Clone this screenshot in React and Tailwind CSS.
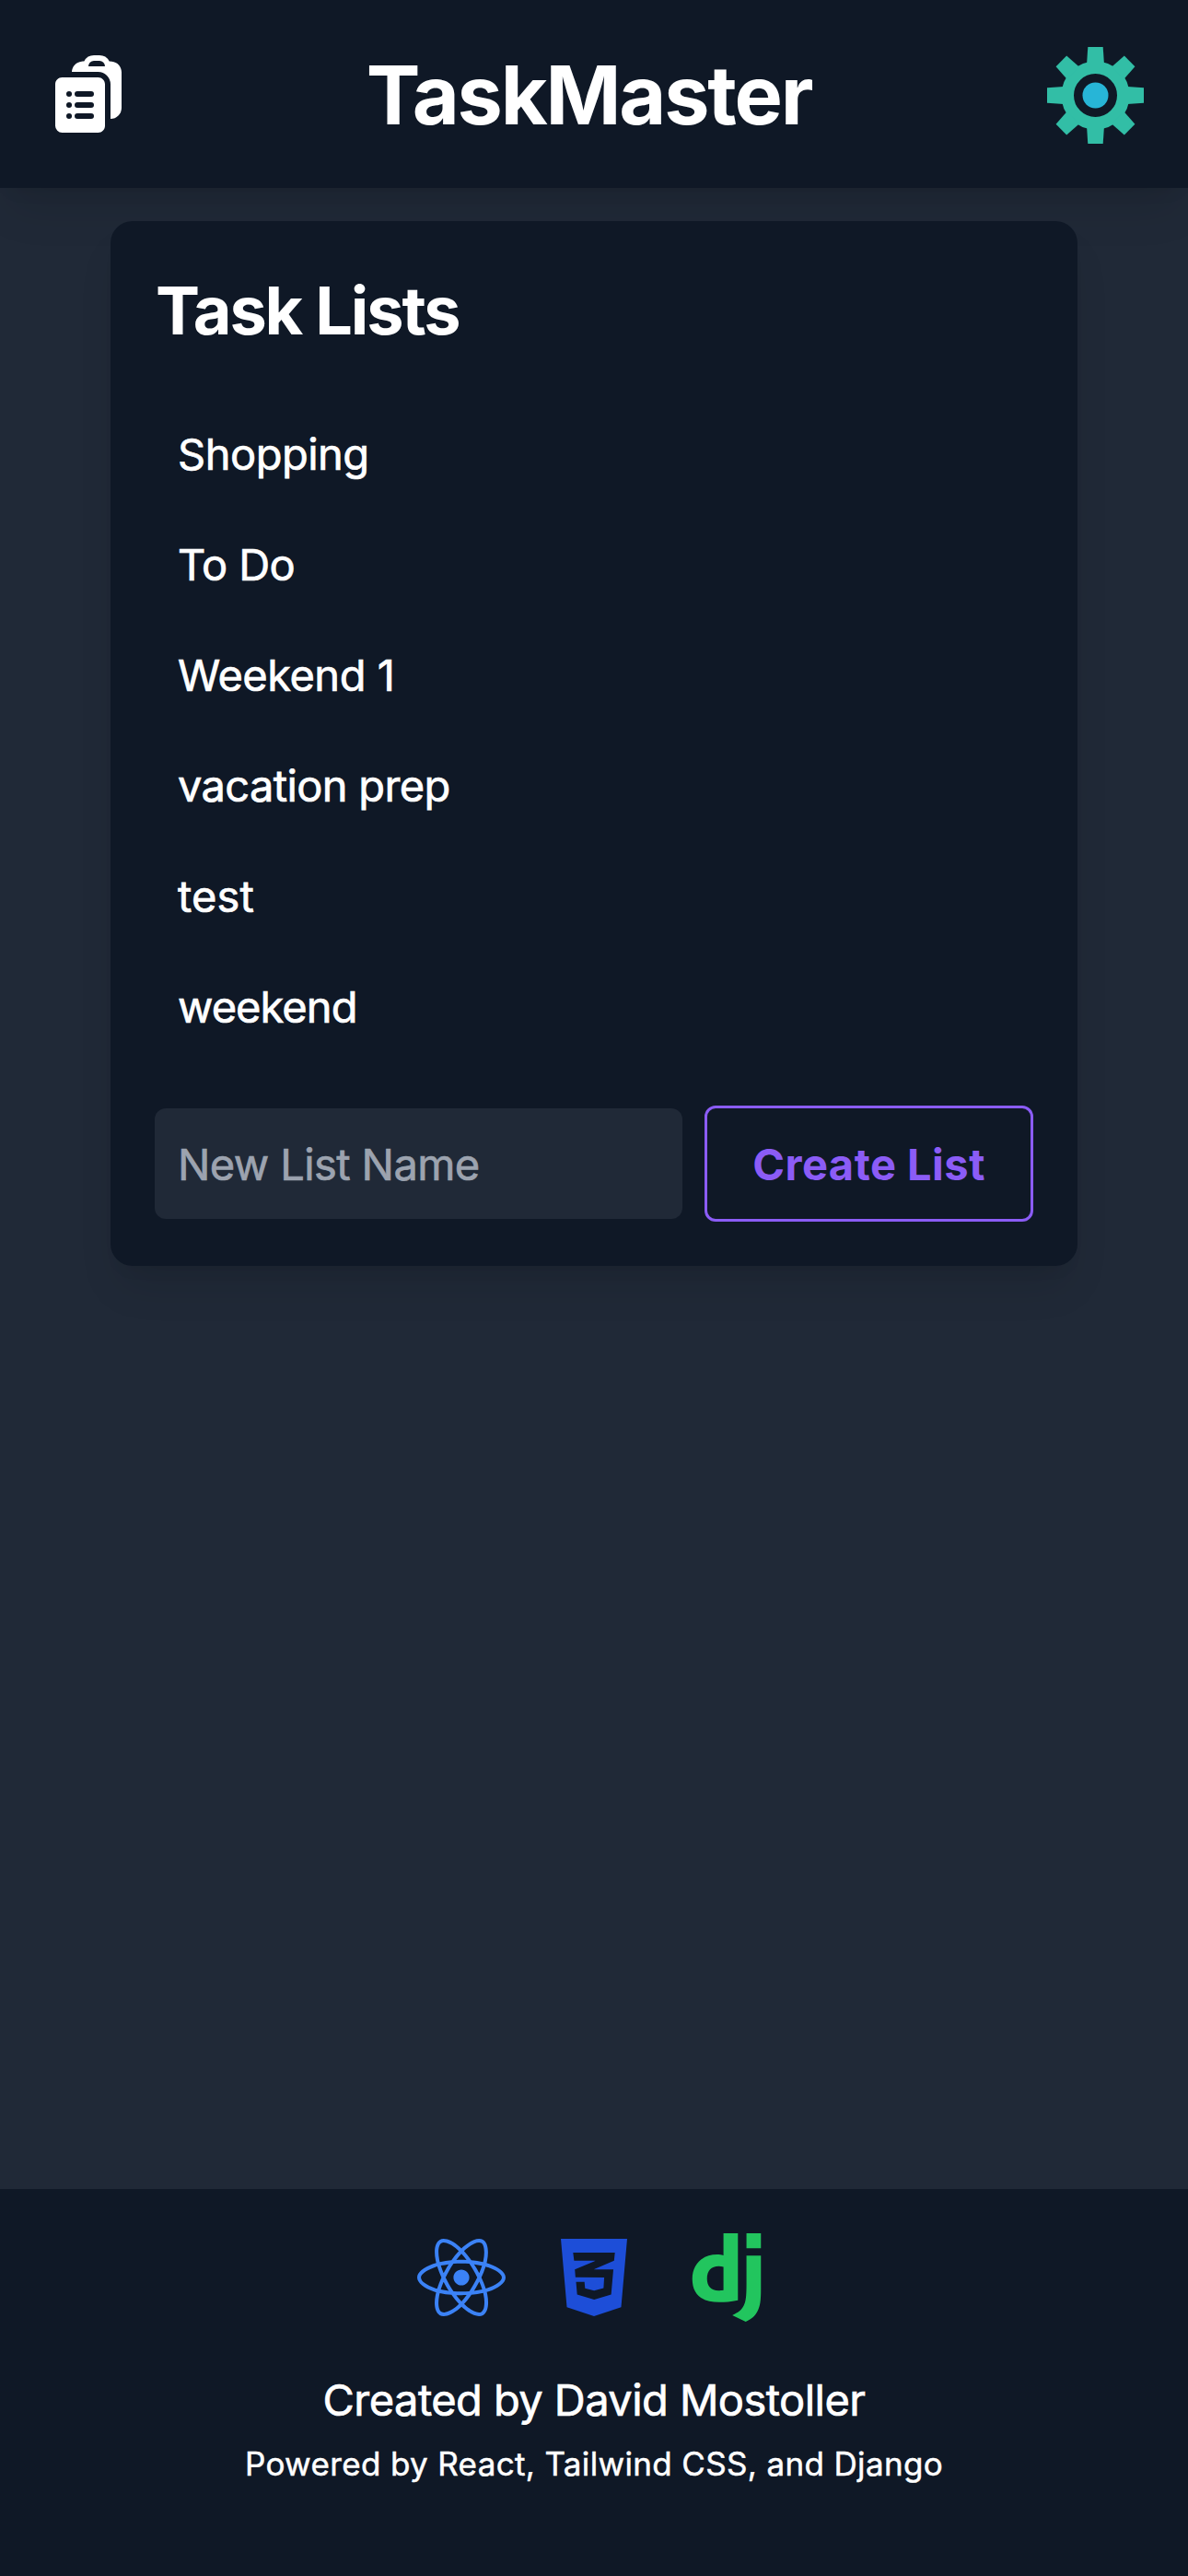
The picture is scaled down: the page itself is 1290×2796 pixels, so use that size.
import { HiClipboardDocumentList } from "react-icons/hi2";
import { FaReact, FaCss3Alt } from "react-icons/fa";
import { SiDjango } from "react-icons/si";

const lists = [
  { name: "Shopping", tracking: "tracking-[-0.5px]" },
  { name: "To Do", tracking: "tracking-[-0.6px]" },
  { name: "Weekend 1", tracking: "tracking-[-0.5px]" },
  { name: "vacation prep", tracking: "tracking-[-0.65px]" },
  { name: "test", tracking: "tracking-[0.1px]" },
  { name: "weekend", tracking: "tracking-[-0.95px]" },
];

const teeth = [0, 45, 90, 135, 180, 225, 270, 315];

function GearIcon() {
  return (
    <svg viewBox="-52.5 -52.5 105 105" className="mt-[3px] size-[105px]">
      <circle r="30.25" fill="none" stroke="#32bea6" strokeWidth="13.5" />
      {teeth.map((angle) => (
        <path
          key={angle}
          d="M-8.2 -52.5H8.2L9.4 -34.5H-9.4Z"
          fill="#32bea6"
          transform={`rotate(${angle})`}
        />
      ))}
      <circle r="14" fill="#27b5d7" />
    </svg>
  );
}

function Header() {
  return (
    <header className="flex h-[204px] items-center justify-between bg-[#0f1826] px-12 shadow-[0_30px_45px_-9px_rgba(0,0,0,0.1),0_12px_18px_-12px_rgba(0,0,0,0.1)]">
      <HiClipboardDocumentList className="size-24" />
      <h1 className="pt-0.5 pr-0.5 text-[88px] leading-[108px] font-bold tracking-[-2.2px]">TaskMaster</h1>
      <GearIcon />
    </header>
  );
}

function TaskLists() {
  return (
    <section className="mx-auto w-[1050px] rounded-3xl bg-[#0f1826] p-12 shadow-[0_30px_45px_-9px_rgba(0,0,0,0.1),0_12px_18px_-12px_rgba(0,0,0,0.1)]">
      <h2 className="mb-[47px] pt-px pl-px text-[72px] leading-24 font-bold tracking-[-2.1px]">Task Lists</h2>
      <ul>
        {lists.map((list) => (
          <li key={list.name} className="pt-[25px] pr-6 pb-[23px] pl-[25px] [-webkit-text-stroke:0.7px]">
            <p className={list.tracking}>{list.name}</p>
          </li>
        ))}
      </ul>
      <form className="mt-12 flex items-center gap-6">
        <input
          className="h-[120px] w-[573px] rounded-xl bg-[#202937] pt-px pr-6 pl-[25px] tracking-[-0.6px] [-webkit-text-stroke:0.7px] placeholder:text-[#9ca3af]"
          placeholder="New List Name"
        />
        <button
          type="button"
          className="h-[126px] w-[357px] rounded-xl border-3 border-[#8b5cf6] pt-0.5 font-bold tracking-[0.5px] whitespace-nowrap text-[#8b5cf6]"
        >
          Create List
        </button>
      </form>
    </section>
  );
}

function Footer() {
  return (
    <footer className="flex h-[420px] flex-col items-center bg-[#0f1826] pt-12">
      <div className="mb-[49px] flex gap-12">
        <FaReact className="size-24 text-[#3b82f6]" />
        <FaCss3Alt className="size-24 text-[#1d4ed8]" />
        <SiDjango className="size-24 text-[#22c55e]" />
      </div>
      <p className="tracking-[-0.55px] [-webkit-text-stroke:0.7px]">Created by David Mostoller</p>
      <p className="mt-[3px] text-[35px] leading-[60px] tracking-[0.35px] [-webkit-text-stroke:0.5px]">
        Powered by React, Tailwind CSS, and Django
      </p>
    </footer>
  );
}

export default function App() {
  return (
    <div className="flex h-[2796px] w-[1290px] flex-col bg-[#202937] font-[Inter,sans-serif] text-[47px] leading-[72px] text-white">
      <Header />
      <main className="flex-1 pt-9">
        <TaskLists />
      </main>
      <Footer />
    </div>
  );
}
